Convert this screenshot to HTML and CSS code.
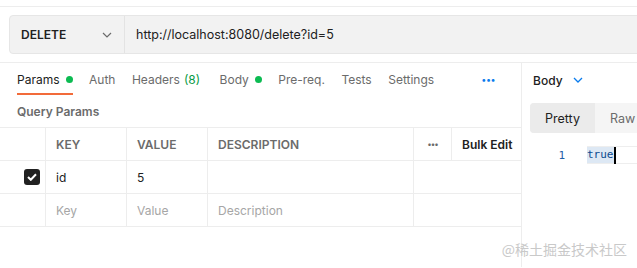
FILE: index.html
```html
<!DOCTYPE html>
<html>
<head>
    <meta charset="UTF-8">
    <title>DELETE request</title>
    <link rel="stylesheet" href="styles.css">
</head>
<body>
    <div class="topbar"></div>

    <div class="url-row">
        <div class="url-bar">
            <div class="method">
                <span>DELETE</span>
                <svg class="chevron" width="10" height="6" viewBox="0 0 10 6"><path d="M1 1l4 4 4-4" fill="none" stroke="#6b6b6b" stroke-width="1.2"/></svg>
            </div>
            <div class="url">http://localhost:8080/delete?id=5</div>
        </div>
    </div>

    <div class="main">
        <div class="request">
            <div class="tabs">
                <div class="tab active">Params <span class="dot"></span></div>
                <div class="tab">Auth</div>
                <div class="tab headers">Headers <span class="count">(8)</span></div>
                <div class="tab">Body <span class="dot"></span></div>
                <div class="tab">Pre-req.</div>
                <div class="tab">Tests</div>
                <div class="tab">Settings</div>
                <div class="more">&bull;&bull;&bull;</div>
            </div>

            <div class="section-title">Query Params</div>

            <div class="params">
                <div class="row head">
                    <div class="cell check"></div>
                    <div class="cell key">KEY</div>
                    <div class="cell value">VALUE</div>
                    <div class="cell desc">DESCRIPTION</div>
                    <div class="cell dots">&bull;&bull;&bull;</div>
                    <div class="cell bulk">Bulk Edit</div>
                </div>
                <div class="row">
                    <div class="cell check">
                        <span class="box">
                            <svg width="10" height="8" viewBox="0 0 10 8"><path d="M1 4l2.8 2.8L9 1.2" fill="none" stroke="#fff" stroke-width="2"/></svg>
                        </span>
                    </div>
                    <div class="cell key">id</div>
                    <div class="cell value">5</div>
                    <div class="cell desc"></div>
                    <div class="cell rest"></div>
                </div>
                <div class="row">
                    <div class="cell check"></div>
                    <div class="cell key placeholder">Key</div>
                    <div class="cell value placeholder">Value</div>
                    <div class="cell desc placeholder">Description</div>
                    <div class="cell rest"></div>
                </div>
            </div>
        </div>

        <div class="response">
            <div class="resp-head">
                <span>Body</span>
                <svg class="chevron" width="10" height="6" viewBox="0 0 10 6"><path d="M1 1l4 4 4-4" fill="none" stroke="#097bed" stroke-width="1.3"/></svg>
            </div>
            <div class="modes">
                <div class="mode on">Pretty</div>
                <div class="mode">Raw</div>
            </div>
            <div class="code">
                <span class="lineno">1</span>
                <span class="line"><span class="sel">true</span><span class="caret"></span></span>
            </div>
        </div>
    </div>

    <div class="watermark">@稀土掘金技术社区</div>
</body>
</html>
```

FILE: styles.css
```css
body {
    margin: 0;
    width: 637px;
    height: 268px;
    overflow: hidden;
    position: relative;
    background-color: #fff;
    font-family: Inter, "Noto Sans", sans-serif;
    font-size: 12px;
    color: #212121;
}

.topbar {
    height: 6px;
    border-bottom: 1px solid #ededed;
}

/* barra de url */
.url-row {
    padding: 8px 0 8px 9px;
    border-bottom: 1px solid #ededed;
}
.url-bar {
    display: flex;
    height: 37px;
    margin-right: -10px;
    background-color: #f2f2f2;
    border: 1px solid #e6e6e6;
    border-radius: 4px;
}
.method {
    width: 115px;
    display: flex;
    align-items: center;
    justify-content: space-between;
    padding: 0 12px 0 11px;
    box-sizing: border-box;
    border-right: 1px solid #e3e3e3;
    font-weight: 600;
}
.url {
    display: flex;
    align-items: center;
    padding-left: 11px;
    font-size: 12.5px;
}

.main {
    display: flex;
    height: 204px;
}
.request {
    flex: none;
    width: 521px;
    border-right: 1px solid #ededed;
}
.response {
    flex: 1;
    min-width: 0;
    overflow: hidden;
}

/* abas */
.tabs {
    display: flex;
    align-items: stretch;
    height: 32px;
    padding-left: 17px;
    gap: 16.5px;
}
.tab {
    display: flex;
    align-items: center;
    gap: 6px;
    color: #6b6b6b;
    border-bottom: 2px solid transparent;
    padding-top: 2px;
    white-space: nowrap;
}
.tab.active {
    color: #212121;
    border-bottom-color: #f26b3a;
}
.tab.headers {
    margin-right: 3px;
}
.dot {
    width: 7px;
    height: 7px;
    border-radius: 50%;
    background-color: #0cbb52;
}
.count {
    color: #0a9b45;
    margin-left: -2px;
}
.more {
    margin-left: auto;
    margin-right: 26px;
    display: flex;
    align-items: center;
    color: #097bed;
    font-size: 9px;
    letter-spacing: -0.5px;
}

.section-title {
    padding: 9px 17px 7px;
    line-height: 16px;
    font-weight: 600;
    color: #6b6b6b;
}

/* tabela */
.params {
    border-top: 1px solid #ededed;
}
.row {
    display: flex;
    height: 32px;
    border-bottom: 1px solid #ededed;
}
.cell {
    flex: none;
    display: flex;
    align-items: center;
    padding-left: 10px;
    box-sizing: border-box;
    border-left: 1px solid #ededed;
    white-space: nowrap;
}
.cell.check {
    width: 45px;
    padding-left: 24px;
    border-left: none;
}
.cell.key { width: 81px; }
.cell.value { width: 81px; }
.cell.desc { width: 206px; }
.cell.dots {
    width: 38px;
    justify-content: center;
    padding-left: 0;
    color: #6b6b6b;
    font-size: 8px;
    letter-spacing: -1px;
}
.cell.bulk {
    flex: 1;
    font-weight: 600;
}
.cell.rest { flex: 1; }
.head .cell.key,
.head .cell.value,
.head .cell.desc {
    font-weight: 600;
    color: #6b6b6b;
}
.placeholder {
    color: #a6a6a6;
}
.box {
    width: 16px;
    height: 16px;
    border-radius: 3px;
    background-color: #212121;
    display: flex;
    align-items: center;
    justify-content: center;
}

/* resposta */
.resp-head {
    height: 32px;
    display: flex;
    align-items: center;
    gap: 10px;
    padding: 2px 0 0 11px;
    box-sizing: border-box;
    font-weight: 500;
}
.modes {
    display: flex;
    height: 30px;
    margin: 8px 0 0 8px;
    background-color: #f5f5f5;
    border-radius: 4px 0 0 4px;
}
.mode {
    display: flex;
    align-items: center;
    padding: 0 15px;
    color: #6b6b6b;
    font-size: 12.5px;
}
.mode.on {
    width: 66px;
    box-sizing: border-box;
    justify-content: center;
    background-color: #ebebeb;
    color: #212121;
    border-radius: 4px 0 0 4px;
}
.code {
    display: flex;
    align-items: center;
    margin-top: 14px;
    height: 16px;
    font-family: "DejaVu Sans Mono", monospace;
    font-size: 11px;
    color: #1f5fa6;
}
.lineno {
    width: 65px;
    flex: none;
    text-align: right;
    padding-right: 22px;
    box-sizing: border-box;
}
.line {
    flex: 1;
    display: flex;
    height: 16px;
    align-items: center;
    border-top: 1px solid #eeeeee;
    border-bottom: 1px solid #eeeeee;
}
.sel {
    background-color: #dde8f4;
    color: #0b4a8f;
    line-height: 16px;
}
.caret {
    width: 2px;
    height: 17px;
    background-color: #000;
}

.watermark {
    position: absolute;
    right: 10px;
    bottom: 9px;
    font-family: "Noto Sans CJK SC", sans-serif;
    font-size: 14px;
    color: #c9c9c9;
}
```
